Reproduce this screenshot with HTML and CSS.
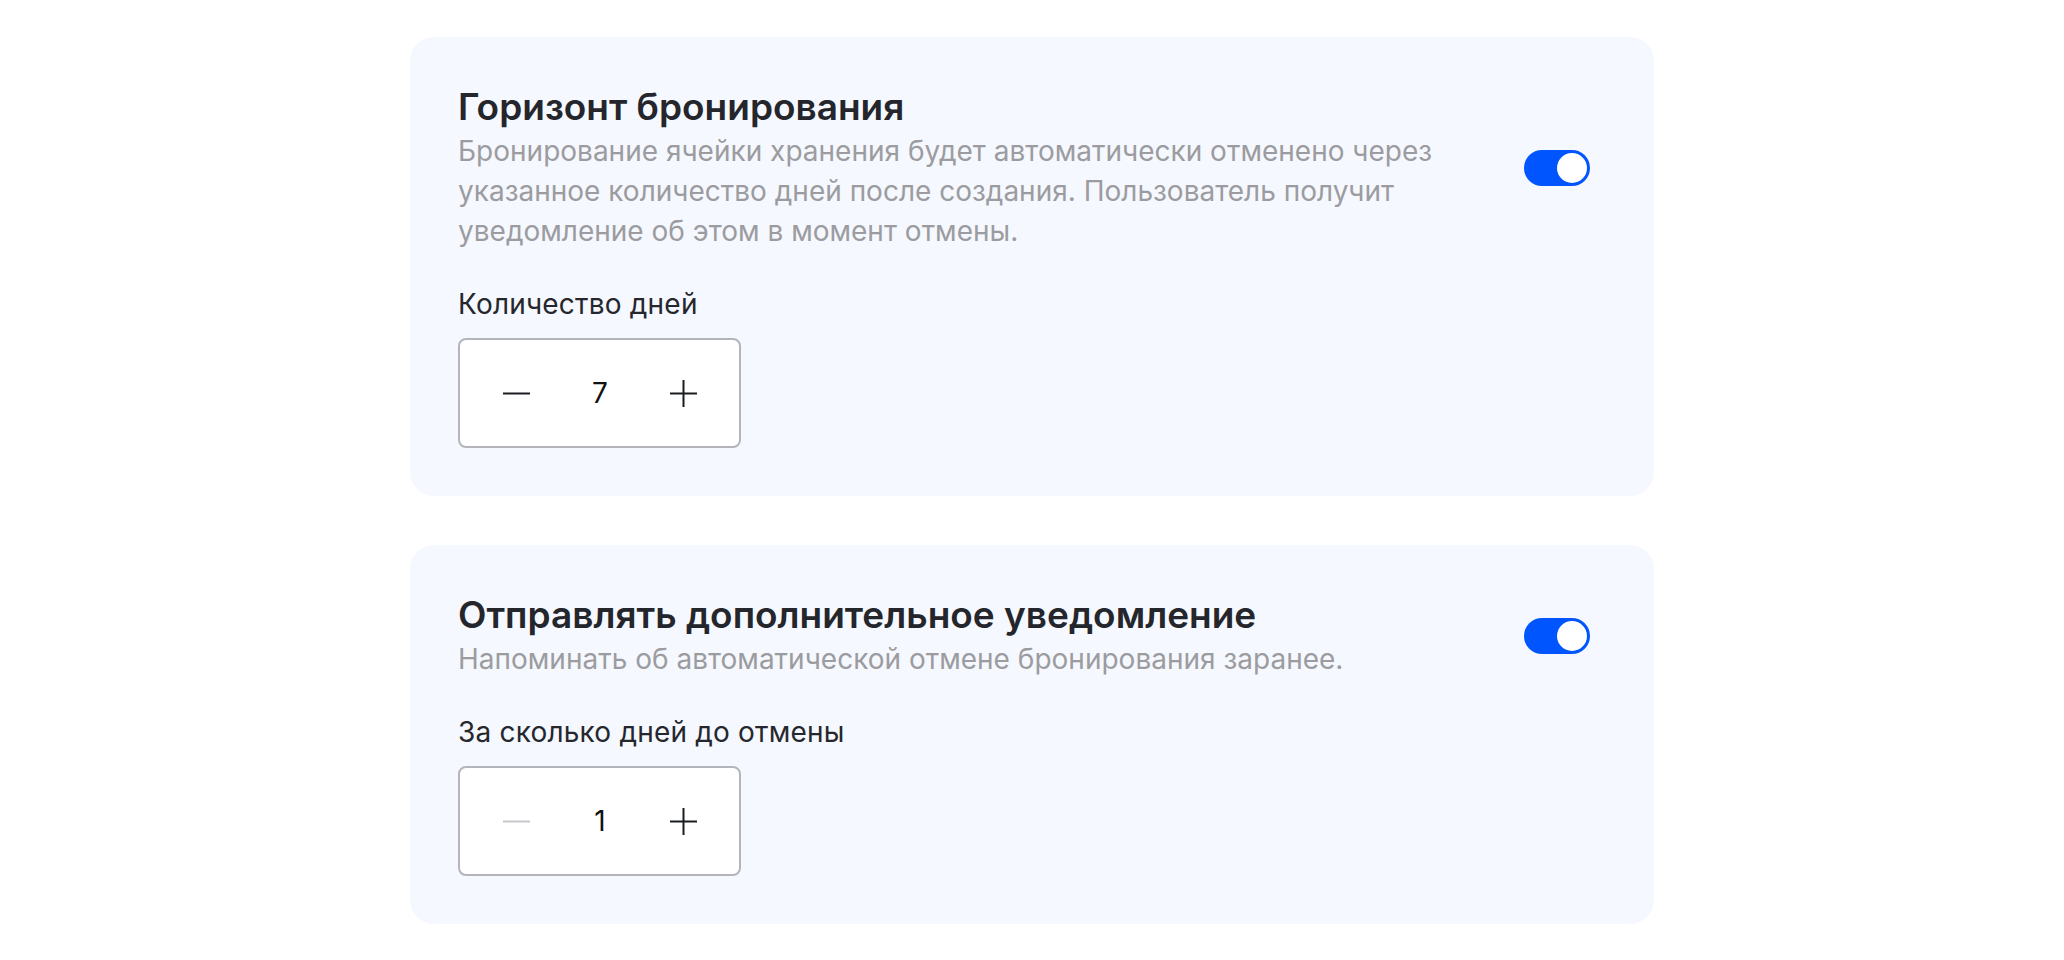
FILE: index.html
```html
<!DOCTYPE html>
<html lang="ru">
<head>
<meta charset="utf-8">
<title>Настройки бронирования</title>
<link rel="stylesheet" href="styles.css">
</head>
<body>
<main class="page">
  <section class="card">
    <div class="card-head">
      <div class="card-text">
        <h2 class="card-title">Горизонт бронирования</h2>
        <p class="card-desc">Бронирование ячейки хранения будет автоматически отменено через указанное количество дней после создания. Пользователь получит уведомление об этом в момент отмены.</p>
      </div>
      <div class="toggle is-on"><span class="toggle-knob"></span></div>
    </div>
    <div class="field-label">Количество дней</div>
    <div class="stepper">
      <button class="step-btn" type="button" aria-label="Уменьшить">
        <svg width="27" height="27" viewBox="0 0 27 27"><path d="M0 13.5H27" stroke="currentColor" stroke-width="2"/></svg>
      </button>
      <span class="step-value">7</span>
      <button class="step-btn" type="button" aria-label="Увеличить">
        <svg width="27" height="27" viewBox="0 0 27 27"><path d="M0 13.5H27M13.5 0V27" stroke="currentColor" stroke-width="2"/></svg>
      </button>
    </div>
  </section>

  <section class="card">
    <div class="card-head">
      <div class="card-text">
        <h2 class="card-title">Отправлять дополнительное уведомление</h2>
        <p class="card-desc">Напоминать об автоматической отмене бронирования заранее.</p>
      </div>
      <div class="toggle is-on"><span class="toggle-knob"></span></div>
    </div>
    <div class="field-label">За сколько дней до отмены</div>
    <div class="stepper">
      <button class="step-btn is-disabled" type="button" aria-label="Уменьшить">
        <svg width="27" height="27" viewBox="0 0 27 27"><path d="M0 13.5H27" stroke="currentColor" stroke-width="2"/></svg>
      </button>
      <span class="step-value">1</span>
      <button class="step-btn" type="button" aria-label="Увеличить">
        <svg width="27" height="27" viewBox="0 0 27 27"><path d="M0 13.5H27M13.5 0V27" stroke="currentColor" stroke-width="2"/></svg>
      </button>
    </div>
  </section>
</main>
</body>
</html>
```

FILE: styles.css
```css
* { box-sizing: border-box; }

html, body {
  margin: 0;
  padding: 0;
  background: #ffffff;
}

body {
  font-family: Inter, "Noto Sans", "Liberation Sans", sans-serif;
  color: #25272d;
}

.page {
  width: 1244px;
  margin: 0 auto;
  padding-top: 37px;
  display: flex;
  flex-direction: column;
  gap: 49px;
}

.card {
  background: #f5f8fe;
  border-radius: 24px;
  padding: 48px;
  display: flex;
  flex-direction: column;
  align-items: flex-start;
}

.card-head {
  width: 100%;
  display: flex;
  align-items: center;
  justify-content: space-between;
}

.card-text {
  max-width: 1040px;
}

.card-title {
  margin: 0;
  font-size: 37px;
  line-height: 44px;
  font-weight: 600;
  color: #24262c;
}

.card-desc {
  margin: 2px 0 0;
  font-size: 28px;
  line-height: 40px;
  font-weight: 400;
  color: #9c9ca0;
}

.toggle {
  width: 66px;
  height: 36px;
  border-radius: 18px;
  background: #c9cbd1;
  padding: 3px;
  display: flex;
  margin-right: 16px;
  flex-shrink: 0;
}

.toggle.is-on {
  background: #0055ff;
  justify-content: flex-end;
}

.toggle-knob {
  width: 30px;
  height: 30px;
  border-radius: 50%;
  background: #ffffff;
}

.field-label {
  margin-top: 33px;
  font-size: 28px;
  line-height: 40px;
  letter-spacing: 0.2px;
  color: #25272d;
}

.stepper {
  margin-top: 14px;
  width: 283px;
  height: 110px;
  border: 2px solid #b4b5ba;
  border-radius: 8px;
  background: #ffffff;
  display: flex;
  align-items: center;
  justify-content: space-between;
  padding: 0 42px 0 43px;
}

.step-btn {
  border: 0;
  padding: 0;
  margin: 0;
  background: none;
  width: 27px;
  height: 27px;
  color: #1b1c1f;
  display: flex;
}

.step-btn.is-disabled {
  color: #c6c7cb;
}

.step-value {
  font-size: 28px;
  line-height: 40px;
  color: #111214;
}
```
